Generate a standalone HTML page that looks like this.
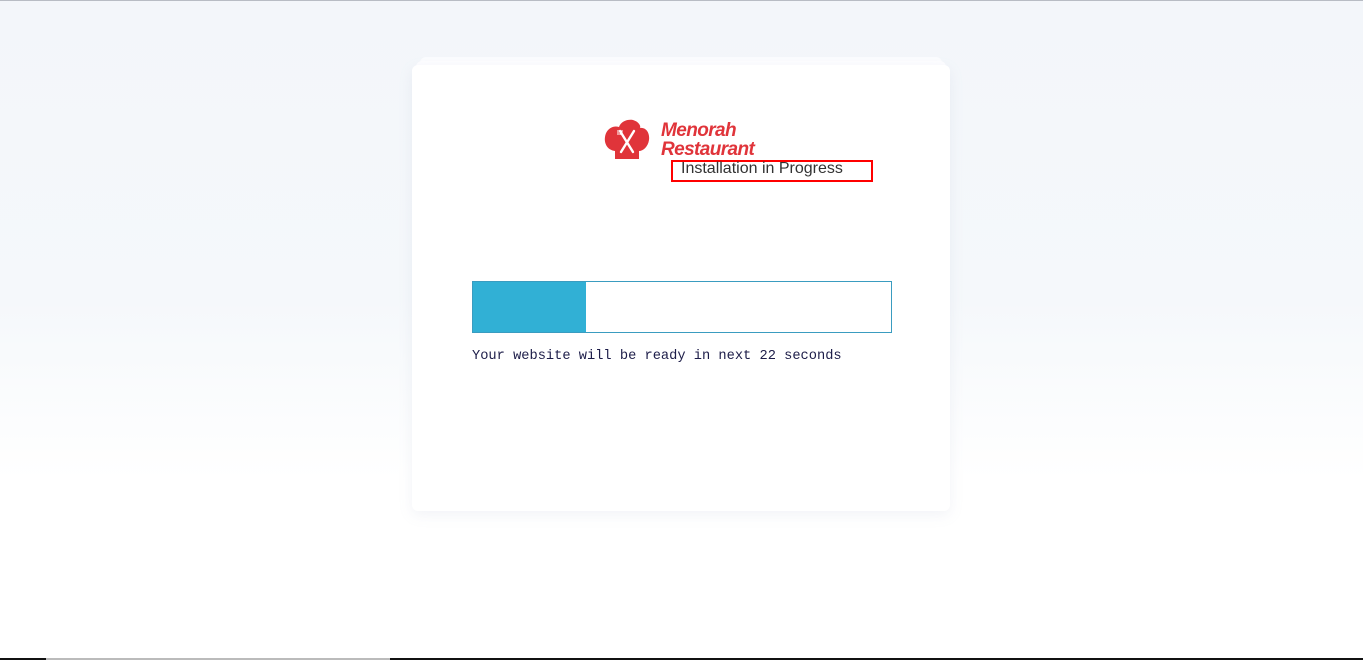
<!DOCTYPE html>
<html><head><style>
html,body{margin:0;padding:0}
body{width:1363px;height:660px;position:relative;overflow:hidden;background:linear-gradient(#f3f6fa 0px,#f5f8fb 300px,#fff 480px);font-family:"Liberation Sans",sans-serif}
.top{position:absolute;left:0;top:0;width:1363px;height:1px;background:#b8bcc4}
.l{position:absolute;background:#fff;border-radius:6px}
.card{position:absolute;left:412px;top:65px;width:538px;height:446px;background:#fff;border-radius:6px;box-shadow:0 4px 14px rgba(150,160,190,.12)}
.brand{position:absolute;left:661px;top:121px;color:#e0343a;font-weight:bold;font-style:italic;font-size:19px;line-height:19px;letter-spacing:-.6px}
.box{position:absolute;left:671px;top:160px;width:198px;height:18px;border:2px solid #f00}
.box span{position:absolute;left:8px;top:-2px;font-size:16px;color:#333;white-space:nowrap}
.bar{position:absolute;left:472px;top:281px;width:418px;height:50px;border:1px solid #3a9cc0;background:#fff}
.fill{position:absolute;left:0;top:0;width:113px;height:50px;background:#31b0d5}
.msg{position:absolute;left:472px;top:349px;font-family:"Liberation Mono",monospace;font-size:13.7px;color:#1c1c48;white-space:nowrap}
.bot{position:absolute;top:658px;height:2px}
</style></head><body>
<div class="top"></div>
<div class="l" style="left:420px;top:57px;width:522px;height:40px;background:#fbfcfe"></div>
<div class="l" style="left:416px;top:61px;width:530px;height:40px;background:#fdfdff"></div>
<div class="card"></div>
<svg style="position:absolute;left:604px;top:119px" width="46" height="42" viewBox="0 0 46 42">
<path d="M11 40 L11 32 C3 31 0 24 1 18 C2 10 9 6 15 8 C17 2 24 0 29 1 C35 3 37 7 36 9 C42 8 46 14 45 21 C44 28 39 32 35 32 L35 40 Z" fill="#e0343a"/>
<path d="M16 12 L29 33 M30 12 L17 33" stroke="#fff" stroke-width="2.4" stroke-linecap="round"/>
<path d="M14 11 L14 16 M16 11 L16 16 M18 11 L18 16" stroke="#fff" stroke-width="1"/>
</svg>
<div class="brand">Menorah<br>Restaurant</div>
<div class="box"><span>Installation in Progress</span></div>
<div class="bar"><div class="fill"></div></div>
<div class="msg">Your website will be ready in next 22 seconds</div>
<div class="bot" style="left:0;width:46px;background:#111"></div>
<div class="bot" style="left:46px;width:344px;background:#bbb"></div>
<div class="bot" style="left:390px;width:973px;background:#111"></div>
</body></html>
